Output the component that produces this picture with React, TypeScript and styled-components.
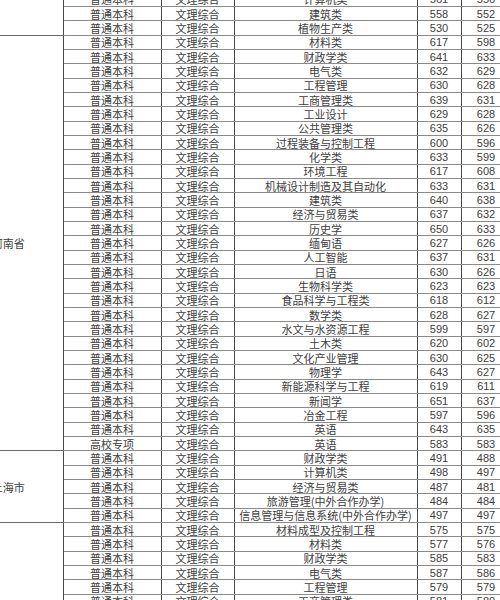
import React from "react"
import styled, { createGlobalStyle } from "styled-components"

const ROW_H = 14.333
const HIDDEN_ROWS = 5

type Row = [string, string, string, number, number]
type Group = { province: string; rows: Row[] }

const ben = (major: string, hi: number, lo: number): Row => ["普通本科", "文理综合", major, hi, lo]

const COLUMNS = [109, 98, 73, 183, 44, 50]

const groups: Group[] = [
  {
    province: "江西省",
    rows: [
      ben("财政学类", 572, 566),
      ben("电气类", 569, 565),
      ben("工商管理类", 563, 559),
      ben("化学类", 558, 554),
      ben("机械类", 566, 560),
      ben("计算机类", 561, 556),
      ben("建筑类", 558, 552),
      ben("植物生产类", 530, 525),
    ],
  },
  {
    province: "河南省",
    rows: [
      ben("材料类", 617, 598),
      ben("财政学类", 641, 633),
      ben("电气类", 632, 629),
      ben("工程管理", 630, 628),
      ben("工商管理类", 639, 631),
      ben("工业设计", 629, 628),
      ben("公共管理类", 635, 626),
      ben("过程装备与控制工程", 600, 596),
      ben("化学类", 633, 599),
      ben("环境工程", 617, 608),
      ben("机械设计制造及其自动化", 633, 631),
      ben("建筑类", 640, 638),
      ben("经济与贸易类", 637, 632),
      ben("历史学", 650, 633),
      ben("缅甸语", 627, 626),
      ben("人工智能", 637, 631),
      ben("日语", 630, 626),
      ben("生物科学类", 623, 623),
      ben("食品科学与工程类", 618, 612),
      ben("数学类", 628, 627),
      ben("水文与水资源工程", 599, 597),
      ben("土木类", 620, 602),
      ben("文化产业管理", 630, 625),
      ben("物理学", 643, 627),
      ben("新能源科学与工程", 619, 611),
      ben("新闻学", 651, 637),
      ben("冶金工程", 597, 596),
      ben("英语", 643, 635),
      ["高校专项", "文理综合", "英语", 583, 583],
    ],
  },
  {
    province: "上海市",
    rows: [
      ben("财政学类", 491, 488),
      ben("计算机类", 498, 497),
      ben("经济与贸易类", 487, 481),
      ben("旅游管理(中外合作办学)", 484, 484),
      ben("信息管理与信息系统(中外合作办学)", 497, 497),
    ],
  },
  {
    province: "天津市",
    rows: [
      ben("材料成型及控制工程", 575, 575),
      ben("材料类", 577, 576),
      ben("财政学类", 585, 583),
      ben("电气类", 587, 586),
      ben("工程管理", 579, 579),
      ben("工商管理类", 581, 580),
      ben("工业设计", 576, 575),
      ben("公共管理类", 578, 577),
      ben("化学类", 580, 578),
      ben("环境工程", 576, 575),
      ben("机械类", 582, 580),
      ben("建筑类", 584, 582),
    ],
  },
]

const GlobalStyle = createGlobalStyle`
  html, body {
    margin: 0;
    padding: 0;
    background: #ffffff;
  }
`

const Page = styled.div`
  width: 500px;
  height: 600px;
  overflow: hidden;
  background: #ffffff;
`

const Sheet = styled.table`
  border-collapse: collapse;
  table-layout: fixed;
  width: ${COLUMNS.reduce((a, b) => a + b, 0)}px;
  margin: ${-(HIDDEN_ROWS * ROW_H + 8.2)}px 0 0 -46px;
  font-family: "Noto Sans CJK SC", "Liberation Sans", sans-serif;
  font-size: 11px;
  color: #404040;
`

const Col = styled.col<{ $w: number }>`
  width: ${props => props.$w}px;
`

const Cell = styled.td`
  height: ${ROW_H - 1}px;
  padding: 0;
  line-height: 12px;
  text-align: center;
  white-space: nowrap;
  overflow: hidden;
  border-top: 1px solid #8a8a8a;
  border-bottom: 1px solid #8a8a8a;
  border-left: 1px solid #4a4a4a;
  border-right: 1px solid #4a4a4a;
`

const Num = styled(Cell)`
  font-family: "Liberation Sans", "Noto Sans CJK SC", sans-serif;
  font-size: 11px;
`

const Province = styled.td`
  padding: 0;
  text-align: center;
  vertical-align: middle;
  white-space: nowrap;
  border-top: 1px solid #6a6a6a;
  border-bottom: 1px solid #6a6a6a;
  border-right: 1px solid #4a4a4a;
`

export default function App() {
  return (
    <Page>
      <GlobalStyle />
      <Sheet>
        <colgroup>
          {COLUMNS.map((w, i) => (
            <Col key={i} $w={w} />
          ))}
        </colgroup>
        <tbody>
          {groups.map(group =>
            group.rows.map((row, i) => (
              <tr key={group.province + i}>
                {i === 0 && <Province rowSpan={group.rows.length}>{group.province}</Province>}
                <Cell>{row[0]}</Cell>
                <Cell>{row[1]}</Cell>
                <Cell>{row[2]}</Cell>
                <Num>{row[3]}</Num>
                <Num>{row[4]}</Num>
              </tr>
            ))
          )}
        </tbody>
      </Sheet>
    </Page>
  )
}
